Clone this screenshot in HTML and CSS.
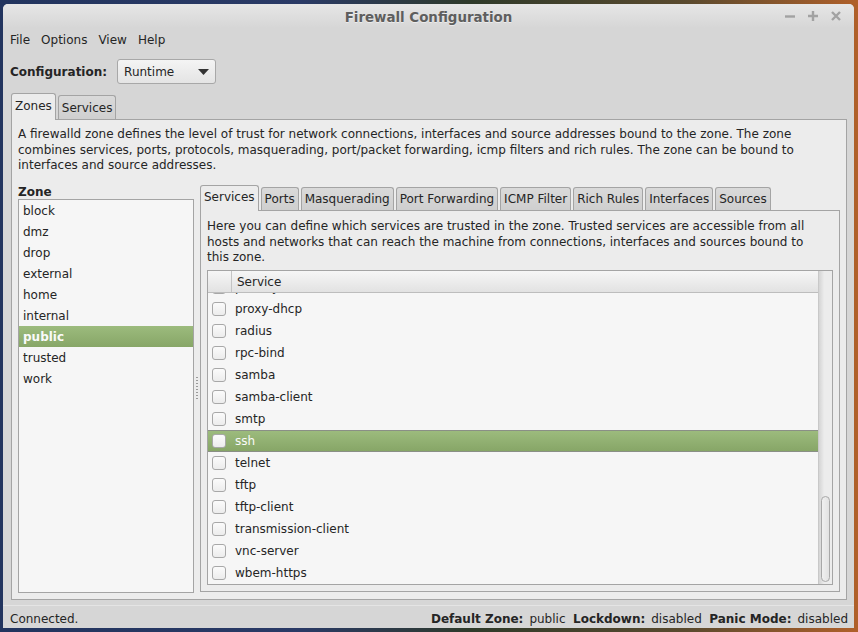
FILE: index.html
```html
<!DOCTYPE html>
<html>
<head>
<meta charset="utf-8">
<title>Firewall Configuration</title>
<link rel="stylesheet" href="styles.css">
</head>
<body>
<div class="window">
  <div class="titlebar">
    <div></div>
    <div class="title">Firewall Configuration</div>
    <div class="controls">
      <svg width="12" height="12" viewBox="0 0 12 12"><path d="M1 6.5H11" stroke="#a2a2a2" stroke-width="2.4"/></svg>
      <svg width="12" height="12" viewBox="0 0 12 12"><path d="M1 6H11M6 1V11" stroke="#a2a2a2" stroke-width="2.4"/></svg>
      <svg width="12" height="12" viewBox="0 0 12 12"><path d="M2 2L10 10M10 2L2 10" stroke="#a2a2a2" stroke-width="2.4"/></svg>
    </div>
  </div>
  <div class="menubar">
    <span class="menu-item">File</span>
    <span class="menu-item">Options</span>
    <span class="menu-item">View</span>
    <span class="menu-item">Help</span>
  </div>
  <div class="config-row">
    <span class="config-label">Configuration:</span>
    <div class="combo">
      <span>Runtime</span>
      <svg width="11" height="6" viewBox="0 0 11 6"><path d="M0 0H11L5.5 6Z" fill="#333"/></svg>
    </div>
  </div>
  <div class="tabs outer-tabs">
    <div class="tab active">Zones</div>
    <div class="tab">Services</div>
  </div>
  <div class="page outer-page">
    <p class="desc">A firewalld zone defines the level of trust for network connections, interfaces and source addresses bound to the zone. The zone<br>combines services, ports, protocols, masquerading, port/packet forwarding, icmp filters and rich rules. The zone can be bound to<br>interfaces and source addresses.</p>
    <div class="panes">
      <div class="zone-pane">
        <div class="zone-label">Zone</div>
        <ul class="zone-list">
          <li>block</li>
          <li>dmz</li>
          <li>drop</li>
          <li>external</li>
          <li>home</li>
          <li>internal</li>
          <li class="selected">public</li>
          <li>trusted</li>
          <li>work</li>
        </ul>
      </div>
      <div class="handle"><span class="dots"></span></div>
      <div class="detail-pane">
        <div class="tabs inner-tabs">
          <div class="tab active">Services</div>
          <div class="tab">Ports</div>
          <div class="tab">Masquerading</div>
          <div class="tab">Port Forwarding</div>
          <div class="tab">ICMP Filter</div>
          <div class="tab">Rich Rules</div>
          <div class="tab">Interfaces</div>
          <div class="tab">Sources</div>
        </div>
        <div class="page inner-page">
          <p class="desc">Here you can define which services are trusted in the zone. Trusted services are accessible from all<br>hosts and networks that can reach the machine from connections, interfaces and sources bound to<br>this zone.</p>
          <div class="tree">
            <div class="tree-main">
              <div class="tree-header">
                <div class="col-check"></div>
                <div class="col-name">Service</div>
              </div>
              <div class="tree-view">
                <ul class="service-list">
                  <li><span class="check"></span>privoxy</li>
                  <li><span class="check"></span>proxy-dhcp</li>
                  <li><span class="check"></span>radius</li>
                  <li><span class="check"></span>rpc-bind</li>
                  <li><span class="check"></span>samba</li>
                  <li><span class="check"></span>samba-client</li>
                  <li><span class="check"></span>smtp</li>
                  <li class="selected"><span class="check"></span>ssh</li>
                  <li><span class="check"></span>telnet</li>
                  <li><span class="check"></span>tftp</li>
                  <li><span class="check"></span>tftp-client</li>
                  <li><span class="check"></span>transmission-client</li>
                  <li><span class="check"></span>vnc-server</li>
                  <li><span class="check"></span>wbem-https</li>
                </ul>
              </div>
            </div>
            <div class="scrollbar"><div class="thumb"></div></div>
          </div>
        </div>
      </div>
    </div>
  </div>
  <div class="statusbar">
    <span>Connected.</span>
    <span class="status-right">
      <b>Default Zone:</b><span class="val">public</span><b>Lockdown:</b><span class="val">disabled</span><b>Panic Mode:</b><span class="val last">disabled</span>
    </span>
  </div>
</div>
</body>
</html>
```
FILE: styles.css
```css
* { box-sizing: border-box; }
html, body { margin: 0; height: 100%; }
body {
  padding: 4px 0 0 3px;
  overflow: hidden;
  background: linear-gradient(90deg, #22345e 0%, #2a3a66 35%, #2f3a2a 55%, #5a4a2e 80%, #b0602a 100%);
  font-family: "DejaVu Sans", sans-serif;
  font-size: 12px;
  color: #252525;
}
.window {
  width: 851px;
  height: 624px;
  background: #d6d6d6;
  border-radius: 5px 5px 0 0;
  display: flex;
  flex-direction: column;
}
.titlebar {
  height: 24px;
  flex: none;
  display: grid;
  grid-template-columns: 1fr auto 1fr;
  align-items: center;
  background: linear-gradient(#e6e6e6, #d6d6d6);
  border-radius: 5px 5px 0 0;
}
.title {
  font-weight: bold;
  font-size: 13.4px;
  color: #5e5e5e;
  text-shadow: 0 1px 0 rgba(255,255,255,0.5);
  padding-top: 2px;
}
.controls {
  display: flex;
  justify-content: flex-end;
  gap: 11px;
  padding-right: 12px;
}
.menubar {
  height: 23px;
  flex: none;
  display: flex;
  align-items: center;
  padding-left: 2px;
}
.menu-item { padding: 0 5px; margin-right: 1px; }
.config-row {
  height: 25px;
  margin: 8px 0 9px 7px;
  flex: none;
  display: flex;
  align-items: center;
  gap: 10px;
}
.config-label { font-weight: bold; }
.combo {
  width: 99px;
  height: 25px;
  border: 1px solid #a8a8a8;
  border-radius: 3px;
  background: linear-gradient(#f4f4f4, #e4e4e4);
  display: flex;
  align-items: center;
  justify-content: space-between;
  padding: 0 6px 0 6px;
}
.tabs {
  display: flex;
  align-items: flex-end;
  flex: none;
  position: relative;
  z-index: 1;
  margin-bottom: -1px;
}
.outer-tabs { height: 27px; padding-left: 8px; gap: 2px; }
.tab {
  height: 24px;
  padding: 1px 3px 0 3px;
  border: 1px solid #a4a4a4;
  border-bottom: none;
  border-radius: 3px 3px 0 0;
  background: linear-gradient(#dadada, #cfcfcf);
  display: flex;
  align-items: center;
  margin-bottom: 1px;
}
.tab.active {
  height: 27px;
  margin-bottom: 0;
  background: #ececec;
  padding-bottom: 3px;
}
.page {
  background: #ececec;
  border: 1px solid #a4a4a4;
}
.outer-page {
  margin: 0 7px 0 8px;
  height: 481px;
  flex: none;
  padding: 7px 6px 6px 6px;
  display: flex;
  flex-direction: column;
}
.desc { margin: 0; line-height: 15.5px; }
.outer-page > .desc { height: 45px; }
.panes {
  margin-top: 12px;
  flex: 1;
  display: flex;
  min-height: 0;
}
.zone-pane {
  width: 176px;
  display: flex;
  flex-direction: column;
}
.zone-label {
  font-weight: bold;
  height: 15px;
  line-height: 17px;
}
.zone-list {
  flex: 1;
  margin: 0;
  padding: 0;
  list-style: none;
  background: #f6f6f6;
  border: 1px solid #a4a4a4;
}
.zone-list li {
  height: 21px;
  line-height: 22px;
  padding-left: 4px;
}
.zone-list li.selected,
.service-list li.selected {
  background: linear-gradient(#9cbb7d, #87a667);
  color: #fafafa;
}
.zone-list li.selected { font-weight: bold; }
.handle {
  width: 6px;
  display: flex;
  align-items: center;
  justify-content: center;
}
.dots {
  width: 2px;
  height: 25px;
  background: radial-gradient(circle, #9a9a9a 0.8px, transparent 1.1px) 0 0 / 2px 3px repeat-y;
}
.detail-pane {
  flex: 1;
  display: flex;
  flex-direction: column;
  padding-top: 1px;
  padding-bottom: 1px;
}
.inner-tabs { height: 26px; gap: 2px; }
.inner-tabs .tab { height: 23px; padding-top: 0; }
.inner-tabs .tab.active { height: 26px; }
.inner-page {
  flex: 1;
  padding: 8px 6px 6px 6px;
  display: flex;
  flex-direction: column;
  min-height: 0;
}
.inner-page > .desc { height: 45px; }
.tree {
  margin-top: 6px;
  flex: 1;
  border: 1px solid #a4a4a4;
  background: #f6f6f6;
  display: flex;
  min-height: 0;
}
.tree-main {
  flex: 1;
  display: flex;
  flex-direction: column;
  min-width: 0;
}
.tree-header {
  height: 22px;
  flex: none;
  display: flex;
  background: linear-gradient(#f6f6f6, #e2e2e2);
  border-bottom: 1px solid #bdbdbd;
}
.col-check { width: 24px; border-right: 1px solid #c4c4c4; }
.col-name { padding-left: 5px; line-height: 22px; }
.tree-view {
  flex: 1;
  overflow: hidden;
}
.service-list {
  list-style: none;
  margin: -17px 0 0 0;
  padding: 0;
}
.service-list li {
  height: 22px;
  display: flex;
  align-items: center;
  padding-left: 4px;
}
.service-list li.selected {
  border-top: 1px solid #8a8f86;
  border-bottom: 1px solid #8a8f86;
}
.check {
  width: 14px;
  height: 14px;
  border: 1px solid #a8a8a8;
  border-radius: 3px;
  background: linear-gradient(#fbfbfb, #ececec);
  margin-right: 9px;
  flex: none;
}
.scrollbar {
  width: 14px;
  flex: none;
  background: linear-gradient(90deg, #d4d4d4, #ececec 40%, #ececec);
  border-left: 1px solid #c8c8c8;
  display: flex;
  flex-direction: column;
  justify-content: flex-end;
  padding: 0 2px 2px 2px;
}
.thumb {
  height: 86px;
  border: 1px solid #a8a8a8;
  border-radius: 5px;
  background: linear-gradient(90deg, #f0f0f0, #e2e2e2);
}
.statusbar {
  flex: 1;
  display: flex;
  justify-content: space-between;
  align-items: center;
  padding: 3px 6px 0 7px;
  border-top: 1px solid #e4e4e4;
  margin-top: 5px;
}
.status-right .val { margin: 0 7.5px 0 6px; }
.status-right .val.last { margin-right: 0; }
```
